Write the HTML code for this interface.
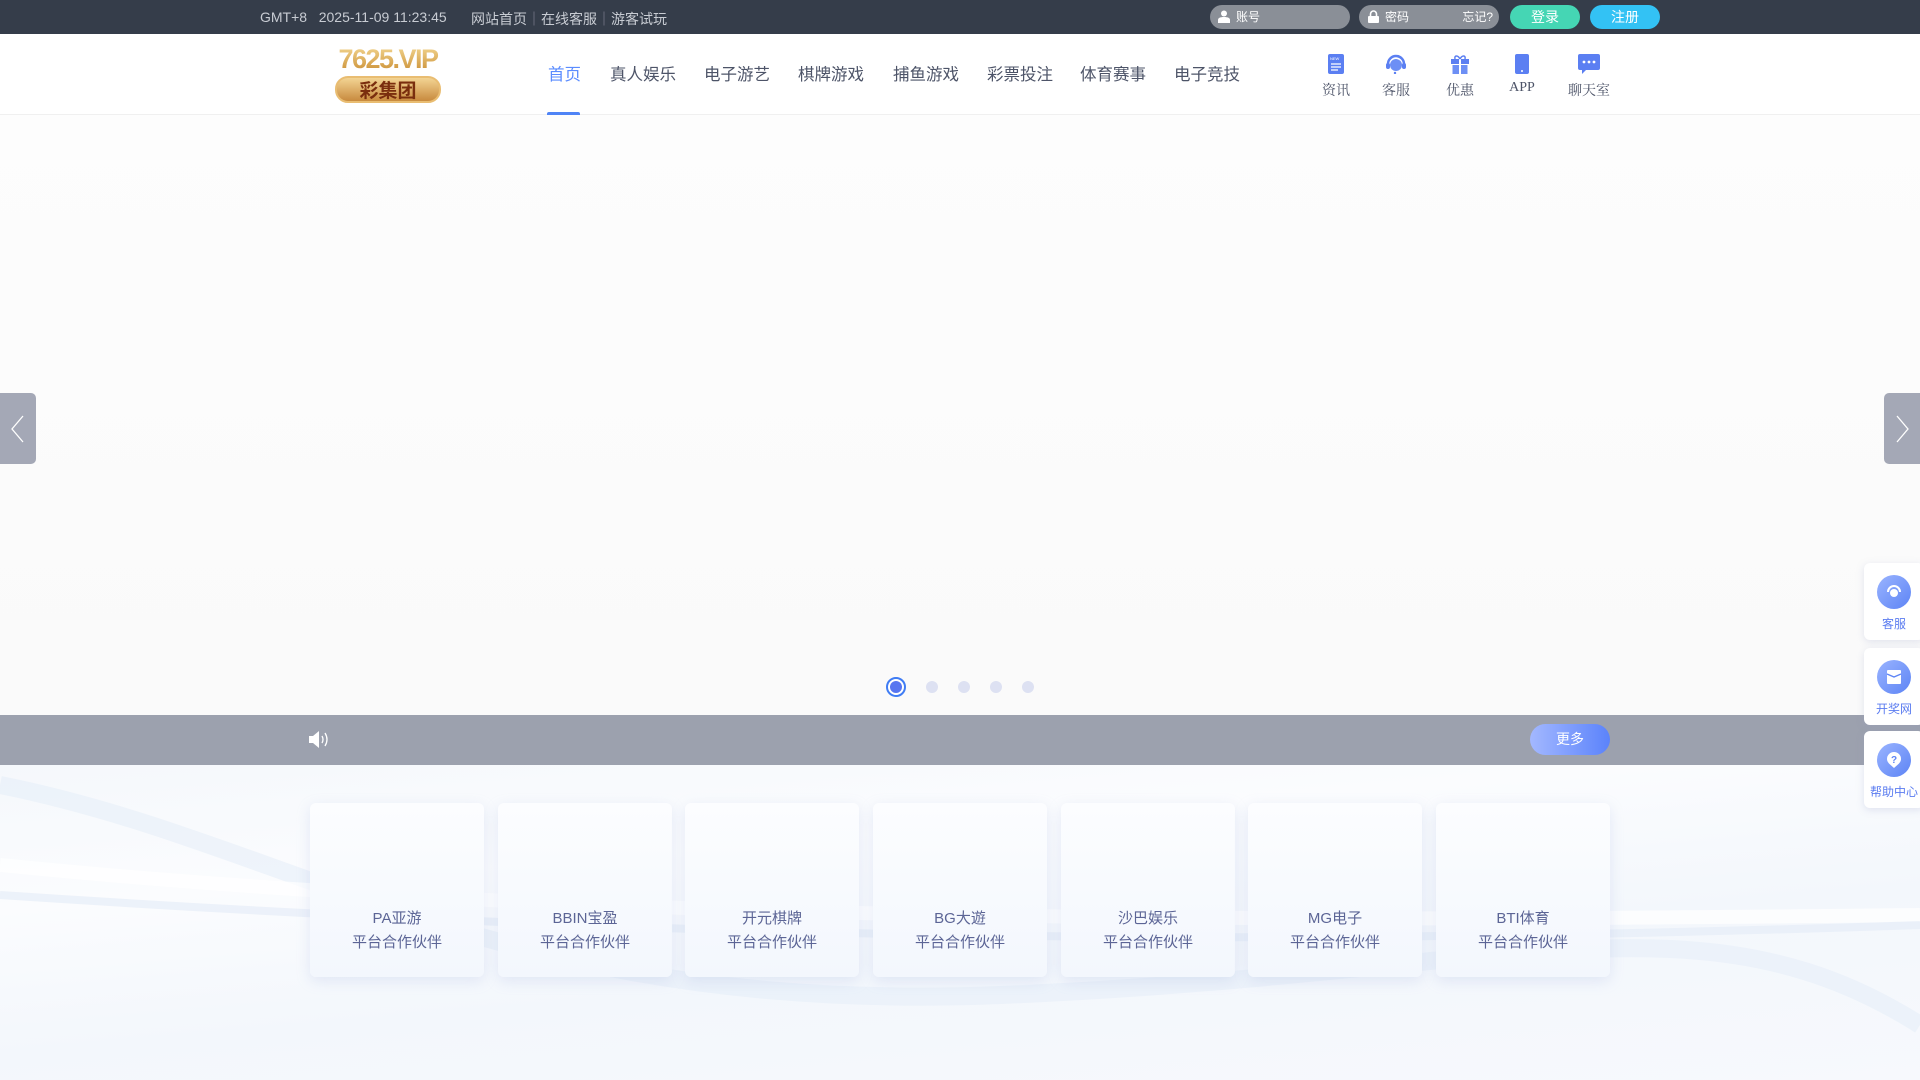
<!DOCTYPE html>
<html><head><meta charset="utf-8"><style>
*{margin:0;padding:0;box-sizing:border-box}
body{width:1920px;height:1080px;overflow:hidden;font-family:"Liberation Sans","Noto Sans CJK SC",sans-serif;background:#fff;position:relative}
.top{position:absolute;left:0;top:0;width:1920px;height:34px;background:#353d4a;color:#c8ccd3;font-size:14px}
.top .t{position:absolute;top:9px}
.inp{position:absolute;top:5px;height:24px;border-radius:12px;background:#8a8f97;color:#fff;font-size:12px;line-height:24px;padding-left:26px}
.btn{position:absolute;top:5px;height:24px;border-radius:12px;color:#fff;font-size:14px;line-height:24px;text-align:center}
.nav{position:absolute;top:34px;left:0;width:1920px;height:81px;background:#fff;border-bottom:1px solid #f0f0f0}
.ni{position:absolute;top:27px;font-size:16.5px;color:#4d5468}
.ic{position:absolute;top:20px;width:60px;text-align:center;font-family:"Liberation Serif","Noto Serif CJK SC",serif;font-size:14px;color:#4d5468}
.ic svg{display:block;margin:0 auto 6px}
.banner{position:absolute;top:115px;left:0;width:1920px;height:600px;background:linear-gradient(#fdfdfd,#fafafa)}
.arr{position:absolute;top:393px;width:36px;height:71px;background:#a4a8b6}
.dot{position:absolute;width:12px;height:12px;border-radius:50%;background:#dde1f2;top:681px}
.notice{position:absolute;top:715px;left:0;width:1920px;height:50px;background:#9ca1ae}
.low{position:absolute;top:765px;left:0;width:1920px;height:315px;background:linear-gradient(175deg,#f5f8fc 0%,#fbfcfe 30%,#f3f7fc 60%,#f7f9fd 100%)}
.card{position:absolute;top:803px;width:174px;height:174px;border-radius:6px;background:linear-gradient(#fcfdff,#f3f7fd);box-shadow:0 4px 14px rgba(150,170,220,.22);text-align:center;color:#5c6596;font-size:15px;line-height:24px;padding-top:104px}
.side{position:absolute;left:1864px;width:60px;height:77px;background:#fff;border-radius:6px;box-shadow:0 2px 8px rgba(150,160,200,.25);text-align:center;color:#5b7cf0;font-size:12px;padding-top:12px}
.side .c{width:34px;height:34px;border-radius:50%;background:linear-gradient(135deg,#9ab4ff,#5d84f5);margin:0 auto 6px;display:flex;align-items:center;justify-content:center}
</style></head><body>
<div class="top">
 <span class="t" style="left:260px">GMT+8&nbsp;&nbsp; 2025-11-09 11:23:45</span>
 <span class="t" style="left:471px">网站首页<span style="color:#889">｜</span>在线客服<span style="color:#889">｜</span>游客试玩</span>
 <div class="inp" style="left:1210px;width:140px"><svg style="position:absolute;left:8px;top:5px" width="12" height="13" viewBox="0 0 12 13"><circle cx="6" cy="3.5" r="3" fill="#fff"/><path d="M0 13v-3c0-2 2-3 6-3s6 1 6 3v3z" fill="#fff"/></svg>账号</div>
 <div class="inp" style="left:1359px;width:140px"><svg style="position:absolute;left:9px;top:5px" width="11" height="13" viewBox="0 0 11 13"><path d="M2.5 6V4a3 3 0 016 0v2" stroke="#fff" stroke-width="1.6" fill="none"/><rect x="0" y="6" width="11" height="7" rx="1" fill="#fff"/></svg>密码<span style="position:absolute;right:6px">忘记?</span></div>
 <div class="btn" style="left:1510px;width:70px;background:#45d6b4">登录</div>
 <div class="btn" style="left:1590px;width:70px;background:#33c2f4">注册</div>
</div>
<div class="nav">
 <div style="position:absolute;left:333px;top:9px;width:110px;height:64px;text-align:center">
  <div style="white-space:nowrap;font:bold 27px/32px 'Liberation Sans',sans-serif;letter-spacing:-1.5px;background:linear-gradient(#f6dc98,#c88a2e);-webkit-background-clip:text;color:transparent">7625.VIP</div>
  <div style="margin:1px auto 0;width:106px;height:27px;border-radius:13px;background:linear-gradient(#f3d493,#c88a3e);border:2px solid #e9bd72;color:#7a2e0e;font:bold 19px/23px 'Noto Sans CJK SC',sans-serif">彩集团</div>
 </div>
 <span class="ni" style="left:548px;color:#5b8cff">首页</span>
 <div style="position:absolute;left:547px;top:78px;width:33px;height:3px;background:#4f84f6;border-radius:2px 2px 0 0"></div>
 <span class="ni" style="left:610px">真人娱乐</span>
 <span class="ni" style="left:704px">电子游艺</span>
 <span class="ni" style="left:798px">棋牌游戏</span>
 <span class="ni" style="left:893px">捕鱼游戏</span>
 <span class="ni" style="left:987px">彩票投注</span>
 <span class="ni" style="left:1080px">体育赛事</span>
 <span class="ni" style="left:1174px">电子竞技</span>
 <div class="ic" style="left:1306px"><svg width="20" height="20" viewBox="0 0 20 20"><rect x="2" y="0" width="16" height="20" rx="2" fill="#5b7ff2"/><text x="4" y="6" font-size="4" fill="#fff" font-family="Liberation Sans">NEW</text><path d="M5 10h10M5 13h10M5 16h7" stroke="#fff" stroke-width="1.3"/></svg>资讯</div>
 <div class="ic" style="left:1366px"><svg width="22" height="20" viewBox="0 0 22 20"><path d="M3 10a8 8 0 0116 0" stroke="#5b7ff2" stroke-width="2.5" fill="none"/><circle cx="11" cy="11" r="6" fill="#6d8ff5"/><rect x="1" y="9" width="4" height="6" rx="2" fill="#5b7ff2"/><rect x="17" y="9" width="4" height="6" rx="2" fill="#5b7ff2"/><circle cx="10" cy="19" r="1.2" fill="#5b7ff2"/></svg>客服</div>
 <div class="ic" style="left:1430px"><svg width="20" height="20" viewBox="0 0 20 20"><rect x="1" y="5" width="18" height="5" fill="#5b7ff2"/><rect x="2.5" y="11" width="15" height="9" fill="#6d8ff5"/><rect x="9" y="5" width="2" height="15" fill="#fff"/><path d="M10 5c-2-4-6-4-5 0M10 5c2-4 6-4 5 0" stroke="#5b7ff2" stroke-width="1.5" fill="none"/></svg>优惠</div>
 <div class="ic" style="left:1492px"><svg width="14" height="20" viewBox="0 0 14 20"><rect x="0" y="0" width="14" height="20" rx="2" fill="#5b7ff2"/><circle cx="7" cy="17" r="1" fill="#fff"/></svg>APP</div>
 <div class="ic" style="left:1559px"><svg width="22" height="20" viewBox="0 0 22 20"><path d="M2 0h18a2 2 0 012 2v12a2 2 0 01-2 2H8l-4 4v-4H2a2 2 0 01-2-2V2a2 2 0 012-2z" fill="#5b7ff2"/><circle cx="6" cy="8" r="1.4" fill="#fff"/><circle cx="11" cy="8" r="1.4" fill="#fff"/><circle cx="16" cy="8" r="1.4" fill="#fff"/></svg>聊天室</div>
</div>
<div class="banner"></div>
<div class="arr" style="left:0;border-radius:0 5px 5px 0"><svg width="36" height="71" viewBox="0 0 36 71"><path d="M23 23l-11 13 11 13" stroke="#fff" stroke-width="1.3" fill="none"/></svg></div>
<div class="arr" style="left:1884px;border-radius:5px 0 0 5px"><svg width="36" height="71" viewBox="0 0 36 71"><path d="M13 23l11 13-11 13" stroke="#fff" stroke-width="1.3" fill="none"/></svg></div>
<div style="position:absolute;left:886px;top:677px;width:20px;height:20px;border-radius:50%;border:2px solid #3f7cf4;background:#fff"><div style="width:12px;height:12px;margin:2px;border-radius:50%;background:#5775f0"></div></div>
<div class="dot" style="left:926px"></div><div class="dot" style="left:958px"></div><div class="dot" style="left:990px"></div><div class="dot" style="left:1022px"></div>
<div class="notice">
 <svg style="position:absolute;left:309px;top:15px" width="22" height="19" viewBox="0 0 22 19"><path d="M0 6h4l6-5v17l-6-5H0z" fill="#fff"/><path d="M13 6q2 3.5 0 7M16 3q4 6.5 0 13" stroke="#fff" stroke-width="1.3" fill="none"/></svg>
 <div style="position:absolute;left:1530px;top:9px;width:80px;height:31px;border-radius:16px;background:linear-gradient(90deg,#a3b8ff,#5b83fb);color:#fff;font-size:14px;line-height:31px;text-align:center">更多</div>
</div>
<div class="low"><svg width="1920" height="315" style="position:absolute;left:0;top:0"><path d="M0 20 C300 80 500 250 1000 230 S1700 120 1920 260" stroke="#e6eef8" stroke-width="18" fill="none" opacity=".6"/><path d="M0 100 C500 150 1100 160 1920 150" stroke="#fff" stroke-width="14" fill="none" opacity=".7"/><path d="M0 130 C600 170 1200 185 1920 160" stroke="#e3ebf7" stroke-width="8" fill="none" opacity=".6"/></svg></div>
<div class="card" style="left:310px">PA亚游<br>平台合作伙伴</div>
<div class="card" style="left:498px">BBIN宝盈<br>平台合作伙伴</div>
<div class="card" style="left:685px">开元棋牌<br>平台合作伙伴</div>
<div class="card" style="left:873px">BG大遊<br>平台合作伙伴</div>
<div class="card" style="left:1061px">沙巴娱乐<br>平台合作伙伴</div>
<div class="card" style="left:1248px">MG电子<br>平台合作伙伴</div>
<div class="card" style="left:1436px">BTI体育<br>平台合作伙伴</div>
<div class="side" style="top:563px"><div class="c"><svg width="18" height="18" viewBox="0 0 18 18"><path d="M3 9a6 6 0 0112 0" stroke="#fff" stroke-width="2" fill="none"/><circle cx="9" cy="10" r="4" fill="#fff"/></svg></div>客服</div>
<div class="side" style="top:648px"><div class="c"><svg width="16" height="16" viewBox="0 0 16 16"><rect x="1" y="1" width="14" height="14" rx="1" fill="#fff"/><path d="M1 5l7 3 7-3" stroke="#5d84f5" stroke-width="1.3" fill="none"/></svg></div>开奖网</div>
<div class="side" style="top:731px"><div class="c"><svg width="18" height="18" viewBox="0 0 18 18"><path d="M9 1a7 7 0 017 7c0 4-4 6-7 9-3-3-7-5-7-9a7 7 0 017-7z" fill="#fff"/><text x="9" y="12" font-size="10" font-weight="bold" text-anchor="middle" fill="#5d84f5" font-family="Liberation Sans">?</text></svg></div>帮助中心</div>
</body></html>
